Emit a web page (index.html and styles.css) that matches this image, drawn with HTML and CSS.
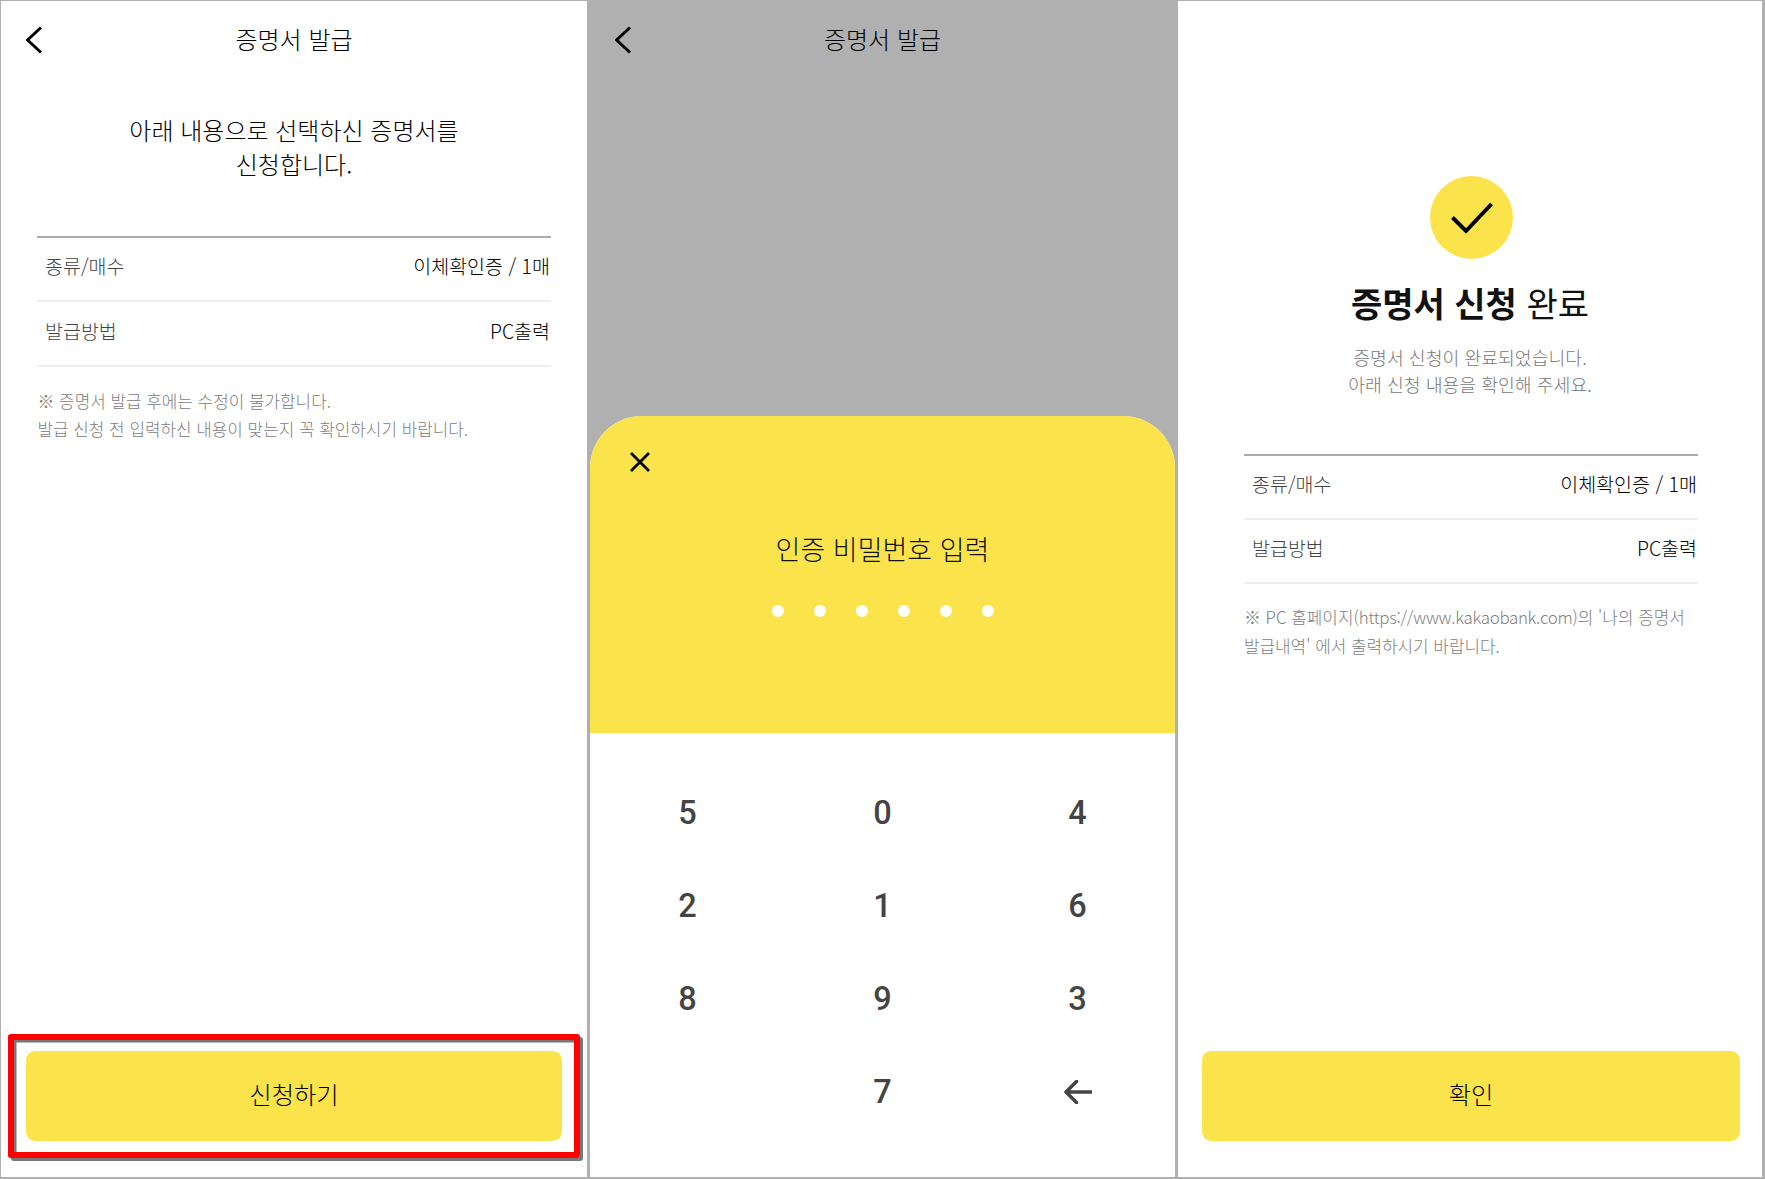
FILE: index.html
```html
<!DOCTYPE html>
<html lang="ko">
<head>
<meta charset="utf-8">
<title>증명서 발급</title>
<link rel="stylesheet" href="styles.css">
</head>
<body>
<main class="screens">
  <section class="panel panel-apply">
    <header class="nav">
      <svg class="back" viewBox="0 0 16 28" aria-hidden="true"><path d="M15 1.500 1.600 14 15 26.500"/></svg>
      <h1 class="nav-title">증명서 발급</h1>
    </header>
    <p class="lead">아래 내용으로 선택하신 증명서를<br>신청합니다.</p>
    <div class="info info-apply">
      <div class="info-row"><span class="info-label">종류/매수</span><span class="info-value">이체확인증 / 1매</span></div>
      <div class="info-row"><span class="info-label">발급방법</span><span class="info-value">PC출력</span></div>
    </div>
    <p class="note">※ 증명서 발급 후에는 수정이 불가합니다.<br>발급 신청 전 입력하신 내용이 맞는지 꼭 확인하시기 바랍니다.</p>
    <div class="cta cta-apply">
      <button class="cta-btn" type="button">신청하기</button>
      <div class="highlight"></div>
    </div>
  </section>

  <section class="panel panel-pin">
    <header class="nav">
      <svg class="back" viewBox="0 0 16 28" aria-hidden="true"><path d="M15 1.500 1.600 14 15 26.500"/></svg>
      <h1 class="nav-title">증명서 발급</h1>
    </header>
    <div class="sheet">
      <div class="sheet-top">
        <svg class="close" viewBox="0 0 22 22" aria-hidden="true"><path d="M2 2 20 20M20 2 2 20"/></svg>
        <h2 class="pin-title">인증 비밀번호 입력</h2>
        <div class="dots"><i></i><i></i><i></i><i></i><i></i><i></i></div>
      </div>
      <div class="keypad">
        <span class="key">5</span><span class="key">0</span><span class="key">4</span>
        <span class="key">2</span><span class="key">1</span><span class="key">6</span>
        <span class="key">8</span><span class="key">9</span><span class="key">3</span>
        <span class="key"></span><span class="key">7</span>
        <span class="key"><svg class="key-back" viewBox="0 0 28 24" aria-hidden="true"><path d="M27 12H2M12.500 1.500 2 12l10.500 10.500"/></svg></span>
      </div>
    </div>
  </section>

  <section class="panel panel-done">
    <div class="badge">
      <svg class="check" viewBox="0 0 42 32" aria-hidden="true"><path d="M1.500 15.500 15 29 40.500 2"/></svg>
    </div>
    <h2 class="done-title"><b>증명서 신청</b> 완료</h2>
    <p class="done-sub">증명서 신청이 완료되었습니다.<br>아래 신청 내용을 확인해 주세요.</p>
    <div class="info info-done">
      <div class="info-row"><span class="info-label">종류/매수</span><span class="info-value">이체확인증 / 1매</span></div>
      <div class="info-row"><span class="info-label">발급방법</span><span class="info-value">PC출력</span></div>
    </div>
    <p class="note note-done">※ PC 홈페이지(<span class="url">https://www.kakaobank.com</span>)의 '나의 증명서<br>발급내역' 에서 출력하시기 바랍니다.</p>
    <div class="cta cta-done">
      <button class="cta-btn" type="button">확인</button>
    </div>
  </section>
</main>
</body>
</html>
```

FILE: styles.css
```css
* { box-sizing: border-box; margin: 0; padding: 0; }

html, body { height: 100%; }

body {
  background: #b0b0b0;
  color: #111;
  font-family: "Noto Sans CJK KR", "Noto Sans", sans-serif;
  font-weight: 300;
  overflow: hidden;
}

.screens {
  display: grid;
  grid-template-columns: 586px 585px 584px;
  column-gap: 3px;
  height: 1179px;
  padding: 1px 0 2px 1px;
}

.panel {
  display: flex;
  flex-direction: column;
  min-height: 0;
  background: #fff;
}

.panel-pin { background: #b0b0b0; }

.nav {
  position: relative;
  display: flex;
  align-items: center;
  justify-content: center;
  height: 76px;
  flex: none;
}

.back {
  position: absolute;
  left: 24.500px;
  top: 25px;
  width: 16px;
  height: 28px;
  fill: none;
  stroke: #000;
  stroke-width: 3;
}

.nav-title {
  font-size: 24px;
  font-weight: 300;
  line-height: 32px;
  color: #000;
}

.lead {
  margin-top: 35.500px;
  text-align: center;
  font-size: 24px;
  line-height: 34px;
  color: #000;
}

.info { border-top: 2px solid #aaa; }

.info-apply { margin: 55.500px 36px 0 36px; }

.info-done { margin: 55.500px 64px 0 66px; }

.info-row {
  display: flex;
  justify-content: space-between;
  align-items: center;
  height: 64.300px;
  padding: 0 1px 6.500px 8px;
  border-bottom: 2px solid #eee;
  font-size: 19.500px;
}

.info-label { color: #444; }

.info-value { color: #000; font-weight: 300; }

.note {
  margin: 20px 0 0 36.500px;
  font-size: 16.900px;
  line-height: 28.400px;
  color: #808080;
}

.note-done { margin: 19px 0 0 66px; }

.url { letter-spacing: -0.3px; }

.cta { position: relative; margin-top: auto; }

.cta-apply { margin: auto 25px 36px 25px; }

.cta-done { margin: auto 22px 36px 24px; }

.cta-btn {
  display: block;
  width: 100%;
  height: 90px;
  padding-bottom: 5px;
  border: 0;
  border-radius: 9px;
  background: #fbe44b;
  color: #000;
  font: 300 24.300px/32px "Noto Sans CJK KR", sans-serif;
}

.highlight {
  position: absolute;
  inset: -17px -18px -17px -18px;
  border: 6px solid #f00;
  border-radius: 3px;
  box-shadow: 3px 3px 0 #777, inset 2.500px 2.500px 0 #777;
  pointer-events: none;
}

.sheet {
  margin-top: auto;
  background: #fff;
  border-radius: 52px 52px 0 0;
}

.sheet-top {
  height: 317px;
  padding: 35px 0 0 39px;
  background: #fbe44b;
  border-radius: 52px 52px 0 0;
}

.close {
  display: block;
  width: 22px;
  height: 22px;
  fill: none;
  stroke: #000;
  stroke-width: 2.800;
}

.pin-title {
  margin: 58px 39px 0 0;
  text-align: center;
  font-size: 27px;
  font-weight: 300;
  line-height: 36px;
  color: #111;
}

.dots {
  display: flex;
  justify-content: center;
  gap: 30px;
  margin: 38.500px 39px 0 0;
}

.dots i {
  width: 12px;
  height: 12px;
  border-radius: 50%;
  background: #fff;
}

.keypad {
  display: grid;
  grid-template-columns: repeat(3, 1fr);
  grid-auto-rows: 92.900px;
  padding: 34px 0 38.600px;
}

.key {
  display: flex;
  align-items: center;
  justify-content: center;
  font-family: Roboto, sans-serif;
  font-size: 32.500px;
  font-weight: 500;
  color: #444;
}

.key-back {
  width: 28px;
  height: 24px;
  fill: none;
  stroke: #444;
  stroke-width: 3.500;
  stroke-linecap: round;
  stroke-linejoin: round;
}

.badge {
  display: flex;
  align-items: center;
  justify-content: center;
  width: 83px;
  height: 83px;
  margin: 175px 0 0 252px;
  border-radius: 50%;
  background: #fbe44b;
}

.check {
  width: 42px;
  height: 32px;
  fill: none;
  stroke: #000;
  stroke-width: 4;
}

.done-title {
  margin-top: 21px;
  text-align: center;
  font-size: 34px;
  font-weight: 400;
  line-height: 46px;
  color: #111;
}

.done-title b { font-weight: 700; }

.done-sub {
  margin-top: 18px;
  text-align: center;
  font-size: 18.300px;
  line-height: 27px;
  color: #777;
}
```
